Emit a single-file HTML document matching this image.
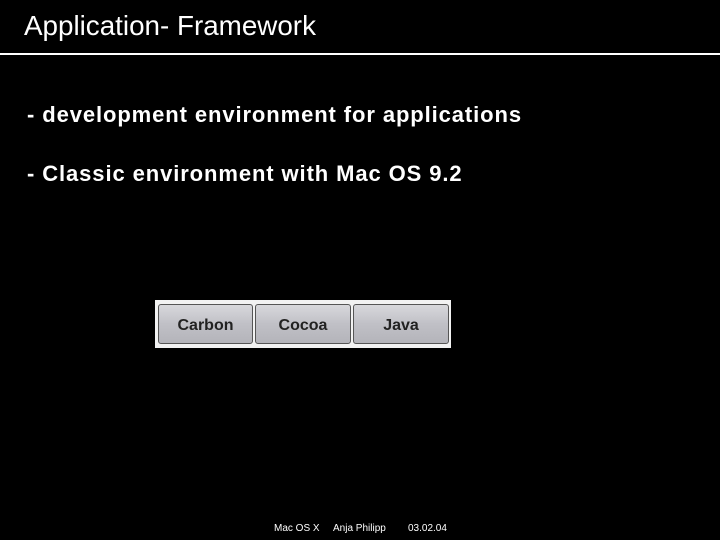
<html><head><style>
body{margin:0;width:720px;height:540px;background:#000;position:relative;overflow:hidden;font-family:"Liberation Sans",sans-serif;color:#fff}
.t{position:absolute;left:24px;top:10px;font-size:27.8px;white-space:nowrap}
.line{position:absolute;left:0;top:53px;width:720px;height:2px;background:#fff}
.b{position:absolute;left:27px;font-size:22px;letter-spacing:0.9px;font-weight:bold;white-space:nowrap}
.img{position:absolute;left:155px;top:300px;width:296px;height:48px;background:#f2f2f2}
.btn{position:absolute;top:4px;height:40px;border:1px solid #555;border-radius:3px;background:linear-gradient(#d8d8dc,#c0c0c6 50%,#b4b4ba);box-sizing:border-box;text-align:center;line-height:42px;font-size:16px;font-weight:bold;color:#222}
.f{position:absolute;top:523px;font-size:10px;white-space:nowrap}
</style></head><body>
<div class="t">Application- Framework</div>
<div class="line"></div>
<div class="b" style="top:102px">- development environment for applications</div>
<div class="b" style="top:161px">- Classic environment with Mac OS 9.2</div>
<div class="img">
<div class="btn" style="left:3px;width:95px">Carbon</div>
<div class="btn" style="left:100px;width:96px">Cocoa</div>
<div class="btn" style="left:198px;width:96px">Java</div>
</div>
<div class="f" style="left:274px">Mac OS X</div>
<div class="f" style="left:333px">Anja Philipp</div>
<div class="f" style="left:408px">03.02.04</div>
</body></html>
